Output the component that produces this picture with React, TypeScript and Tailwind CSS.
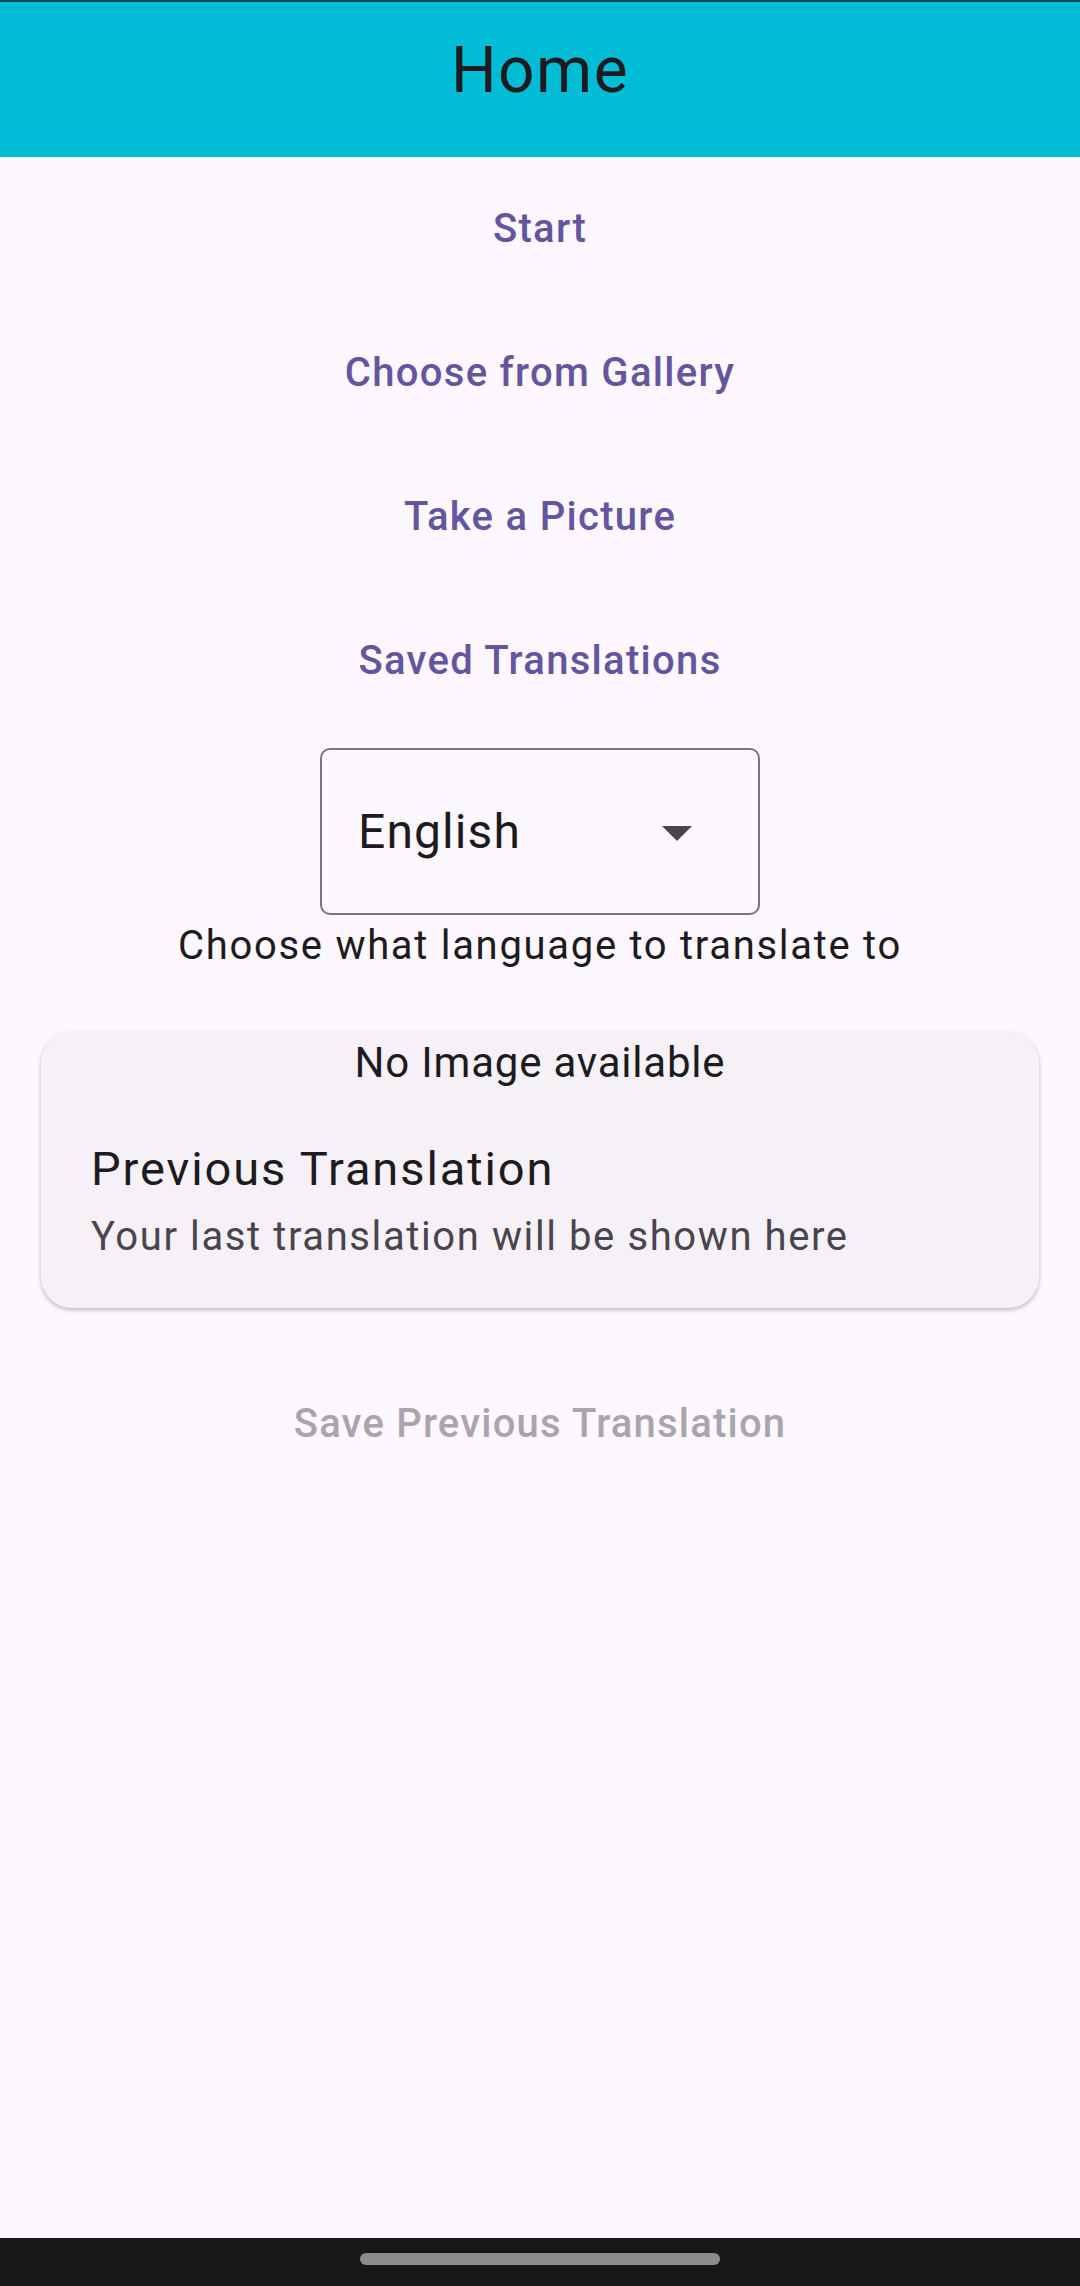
import { useState } from "react";

const actions = ["Start", "Choose from Gallery", "Take a Picture", "Saved Translations"];

export default function App() {
  const [language] = useState("English");

  return (
    <div className="flex h-[2286px] flex-col bg-[#fdf7ff] font-['Roboto',sans-serif] text-[#1d1b20]">
      <header className="h-[157px] shrink-0 border-t-2 border-[#0b4c57] bg-[#00bcd4] pt-[37px] text-center">
        <h1 className="text-[64px] font-normal leading-[64px] tracking-[1.5px] text-[#1d1b20]">Home</h1>
      </header>

      <main className="flex flex-1 flex-col items-center">
        {actions.map((label) => (
          <div key={label} className="flex h-[144px] w-full items-center justify-center">
            <button
              type="button"
              className="text-[40px] font-medium leading-[48px] tracking-[1.3px] text-[#65559e]"
            >
              {label}
            </button>
          </div>
        ))}

        <div className="mt-[15px] flex h-[167px] w-[440px] items-center justify-between rounded-[10px] border-2 border-[#79747e] pl-[36px] pr-[66px]">
          <span className="text-[48px] leading-[56px] tracking-[1.1px] text-[#1d1b20]">{language}</span>
          <svg width="30" height="15" viewBox="0 0 30 15" className="mt-[4px]">
            <path d="M0 0 L30 0 L15 15 Z" fill="#49454f" />
          </svg>
        </div>

        <p className="mt-[11px] text-[40px] leading-[40px] tracking-[1.7px] text-[#1d1b20]">
          Choose what language to translate to
        </p>

        <section className="mt-[66px] w-[998px] rounded-[31px] bg-[#f5f1f6] pb-[47px] pt-[11px] shadow-[0_2px_4px_rgba(0,0,0,0.25)]">
          <p className="text-center text-[42px] leading-[40px] tracking-[0.8px] text-[#1d1b20]">No Image available</p>
          <div className="mt-[58px] pl-[50px]">
            <h2 className="text-[47px] leading-[56px] tracking-[1.9px] text-[#1d1b20]">Previous Translation</h2>
            <p className="mt-[16px] text-[40px] leading-[48px] tracking-[1.6px] text-[#49454f]">
              Your last translation will be shown here
            </p>
          </div>
        </section>

        <button
          type="button"
          disabled
          className="mt-[92px] text-[40px] font-medium leading-[48px] tracking-[1.2px] text-[#aaa5ad]"
        >
          Save Previous Translation
        </button>
      </main>

      <div className="flex h-[48px] shrink-0 items-start justify-center bg-[#181818] pt-[15px]">
        <div className="h-[12px] w-[360px] rounded-full bg-[#8c8c8c]" />
      </div>
    </div>
  );
}
